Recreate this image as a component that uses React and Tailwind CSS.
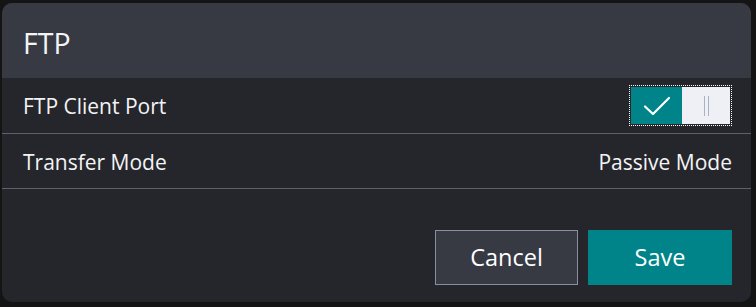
export default function App() {
  return (
    <div className="w-[756px] h-[307px] bg-[#141414] pt-[3px] pl-[2px] overflow-hidden" style={{ fontFamily: '"Open Sans", "Noto Sans", sans-serif' }}>
      <div className="w-[749px] h-[299px] rounded-[10px] overflow-hidden flex flex-col bg-[#25262b] text-[#f3f4f6]">
        <div className="h-[75px] shrink-0 bg-[#373a43] flex items-center pl-[21px] pt-[5px]">
          <span className="text-[28.5px] leading-none">FTP</span>
        </div>
        <div className="h-[56px] flex items-center justify-between pl-[21px] pr-[19px] border-b border-[#5c606c]">
          <span className="text-[21px] pt-[3px]">FTP Client Port</span>
          <div className="w-[103px] h-[41px] border border-dotted border-white p-[1px] flex">
            <div className="w-[51px] h-full bg-[#008489] flex items-center justify-center">
              <svg width="28" height="20" viewBox="0 0 28 20" fill="none">
                <path d="M2 10.5 L10 18 L26 2" stroke="white" strokeWidth="2.2" strokeLinecap="round" strokeLinejoin="round" />
              </svg>
            </div>
            <div className="flex-1 h-full bg-[#eef0f6] flex items-center justify-center gap-[3px]">
              <div className="w-[1px] h-[20px] bg-[#a9b1c4]" />
              <div className="w-[1px] h-[20px] bg-[#a9b1c4]" />
            </div>
          </div>
        </div>
        <div className="h-[55px] flex items-center justify-between pl-[21px] pr-[19px] border-b border-[#5c606c]">
          <span className="text-[21px] pt-[3px]">Transfer Mode</span>
          <span className="text-[21px] pt-[3px]">Passive Mode</span>
        </div>
        <div className="flex-1 flex items-end justify-end gap-[10px] pr-[19px] pb-[17px]">
          <button className="w-[143px] h-[55px] bg-[#373a43] border border-[#8a8fa0] text-[23.5px] text-white">Cancel</button>
          <button className="w-[144px] h-[55px] bg-[#008489] text-[23.5px] text-white">Save</button>
        </div>
      </div>
    </div>
  );
}
